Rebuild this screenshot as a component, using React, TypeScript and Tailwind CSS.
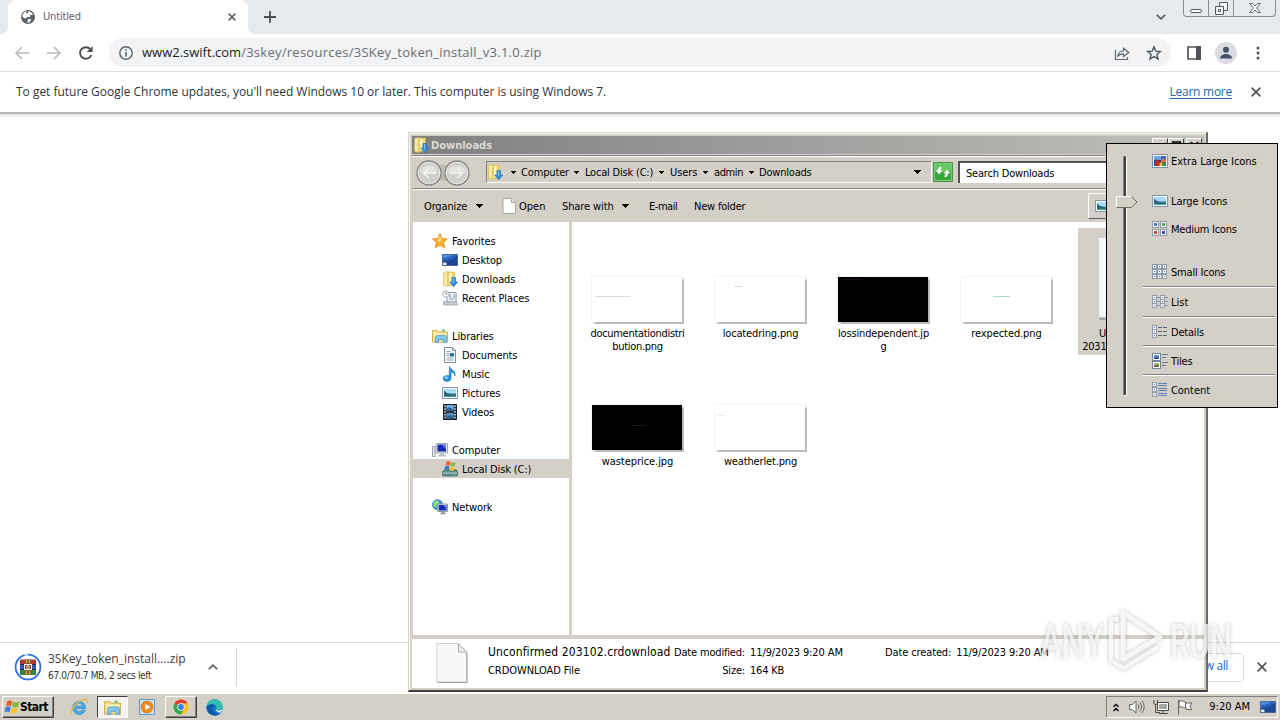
import clsx from 'clsx'
import type { ReactNode } from 'react'

const tahoma = 'font-["DejaVu_Sans_Condensed","DejaVu_Sans",sans-serif] [font-stretch:condensed]'
const chromeFont = 'font-["Open_Sans","Noto_Sans",sans-serif]'

type IconProps = { className?: string }

/* ---------- icons ---------- */

function Svg({ children, className, box = 16 }: { children: ReactNode; className?: string; box?: number }) {
  return (
    <svg viewBox={`0 0 ${box} ${box}`} className={clsx('shrink-0', className ?? 'h-4 w-4')} fill="none">
      {children}
    </svg>
  )
}

function Caret({ className }: IconProps) {
  return (
    <svg viewBox="0 0 7 4" className={clsx('shrink-0', className ?? 'h-1 w-[7px]')} shapeRendering="crispEdges">
      <path d="M0 0h7L3.5 4z" fill="#000" />
    </svg>
  )
}

function DownloadsIcon({ className }: IconProps) {
  return (
    <Svg className={className}>
      <path d="M1.500 1.500 6 .5v15l-4.500-1z" fill="#f8ea9c" stroke="#d2b654" strokeWidth=".7" />
      <path d="M6 1h6.500v13.500H6z" fill="#f0d873" stroke="#d2b654" strokeWidth=".7" />
      <path d="M7 2h2.500v11H7z" fill="#fbf3c0" />
      <path d="M10 6.500h3.500V11h2.200L11.700 15.700 7.800 11H10z" fill="#2f93e0" stroke="#1764ab" strokeWidth=".6" />
      <path d="M11 7.200h.9V12H11z" fill="#8cc8f5" />
    </Svg>
  )
}

function StarIcon() {
  return (
    <Svg>
      <path
        d="m8 .8 2.200 4.800 5.200.500-3.900 3.500 1.200 5.200L8 12.100l-4.700 2.700 1.200-5.200L.6 6.100l5.200-.5z"
        fill="#fcb131"
        stroke="#dd8a1c"
        strokeWidth=".9"
      />
      <path d="m8 2.800 1.500 3.600L8 9 4 7l2.500-.6z" fill="#ffe08a" />
    </Svg>
  )
}

function DesktopIcon({ className }: IconProps) {
  return (
    <Svg className={className}>
      <path d="M.5 2.500h15v11H.5z" fill="#2a62bd" stroke="#4d6a94" />
      <path d="M1 9c4 0 9-1 14-5v9H1z" fill="#1b4792" />
      <path d="M1 3h10C8 5 4 6 1 6z" fill="#4f8ee6" />
      <path d="M1 10.500h3.500V13H1z" fill="#dfe9f5" />
    </Svg>
  )
}

function RecentIcon() {
  return (
    <Svg>
      <path d="M5 2.500h9v10H5z" fill="#f7f9fb" stroke="#8796a6" />
      <path d="M7 5h2.500M11 5h2M7 7h2.500M11 7h2M7 9h5" stroke="#7593b5" />
      <path d="M1.500 11.500h13l1 3.500h-14z" fill="#c5c9ce" stroke="#a0a6ad" strokeWidth=".8" />
      <circle cx="4" cy="4" r="3.200" fill="#fff" stroke="#a5adb5" />
      <path d="M4 2v2h1.500" stroke="#556" strokeWidth=".8" />
    </Svg>
  )
}

function LibraryIcon({ className }: IconProps) {
  return (
    <Svg className={className}>
      <path d="M.5 2.500h5l1 1.500H15.500v10H.5z" fill="#f6e293" stroke="#cdb053" />
      <path d="M1 5.500h14v1H1z" fill="#fdf6d0" />
      <path d="M3.500 14.500V9.500C3.500 8 4.500 7.500 8 7.500h3.500c2 0 3 .5 3 2v5h-3v-3h-5v3z" fill="#86c8f0" stroke="#4a9bd4" strokeWidth=".8" />
      <path d="M10 1.500h3v2h-3z" fill="#6fc06a" />
    </Svg>
  )
}

function DocIcon() {
  return (
    <Svg>
      <path d="M2.500.5h8l3 3v12h-11z" fill="#fbfcfd" stroke="#7f8c9a" />
      <path d="M10.500.5v3h3" stroke="#7f8c9a" />
      <path d="M4.500 4.500h4M4.500 6.500h3M4.500 8.500h3M4.500 11h7M4.500 13h7" stroke="#8fa3bb" />
      <path d="M8 6h4v3.500H8z" fill="#2e6fb8" />
    </Svg>
  )
}

function MusicIcon() {
  return (
    <Svg>
      <path d="M7.500.5c.5 3 6 3 5.500 9.500-.3-2.300-2.300-3.800-4-4v7H7z" fill="#2f95df" stroke="#1d6fb2" strokeWidth=".6" />
      <ellipse cx="5" cy="12.500" rx="3.900" ry="2.900" fill="#2f95df" stroke="#1d6fb2" strokeWidth=".6" />
      <ellipse cx="4.200" cy="11.700" rx="1.700" ry="1.100" fill="#9fd6fa" />
    </Svg>
  )
}

function PictureIcon({ className }: IconProps) {
  return (
    <Svg className={className}>
      <path d="M.5 2.500h15v11H.5z" fill="#fff" stroke="#7f95ab" />
      <path d="M2 4h12v8H2z" fill="#a6dcf8" />
      <path d="M2 8.500c3-.5 5 .5 12 0V12H2z" fill="#2c6f7f" />
      <path d="M2 5.500 5 8l4 1.500H2z" fill="#2d6285" />
      <path d="M2 11h12v1H2z" fill="#4aa38c" />
    </Svg>
  )
}

function VideoIcon() {
  return (
    <Svg>
      <path d="M1.500.5h13v15h-13z" fill="#2a3440" stroke="#161c24" />
      <path d="M4.500 1h7v6h-7z" fill="#6fb4e8" />
      <path d="M4.500 9h7v6h-7z" fill="#5294c9" />
      <path d="M4.500 5l3-2 4 3v1h-7zM4.500 13l4-2 3 3v1h-7z" fill="#2d5f92" />
      <path d="M3 1.500v14M13 1.500v14" stroke="#fff" strokeWidth="1.200" strokeDasharray="1.500 1.300" />
    </Svg>
  )
}

function ComputerIcon() {
  return (
    <Svg>
      <path d="M.5 4.500h2.500v10H.5z" fill="#e3e6ea" stroke="#9aa2ab" />
      <path d="M4 1.500h11.500v9.500H4z" fill="#d9dee4" stroke="#a3abb4" />
      <path d="M5.500 2.500h8.500v7H5.500z" fill="#1728b8" />
      <path d="M9.500 2.500H14v4.500z" fill="#6d86ef" />
      <path d="M8 11.500h4V13H8zM6 13h8v1.500H6z" fill="#b3bac3" />
    </Svg>
  )
}

function WinFlag({ className }: IconProps) {
  return (
    <Svg className={className}>
      <path d="M3.200 2.300c2-1.200 3.500-1 5 0L7 7.300c-1.600-1-3-1-5 0z" fill="#ec5b25" />
      <path d="M9.100 2.800c1.900 1 3.900 1 6.400-.5L14.200 7.500c-2.300 1.200-4.500 1.200-6.300.1z" fill="#84b93a" />
      <path d="M1.700 8.300c2-1 3.500-.9 5 0L5.500 13.300c-1.600-1-3-1-5 0z" fill="#3a7bd5" />
      <path d="M7.700 8.700c1.900 1.100 4 1 6.200 0l-1.300 5.100c-2.200 1-4.300 1-6.200-.1z" fill="#f9c52b" />
    </Svg>
  )
}

function DiskIcon() {
  return (
    <Svg>
      <path d="m1 10 2-1.500h10.500l2 1.500v4.500l-.5.500H1l-.5-.5V11z" fill="#5a8a8c" stroke="#3f6668" strokeWidth=".7" />
      <path d="M1 12H15" stroke="#b9d7d6" />
      <path d="M11.500 13.800h2" stroke="#5fe04b" />
      <path d="M4.500.8c1.700-.9 2.900-.8 4.200 0L7.800 4.500c-1.500-.8-2.900-.7-4.200 0z" fill="#ec5b25" />
      <path d="M9.200 1.200c1.600.7 2.900.7 4.500 0l-.9 3.600c-1.600.8-2.900.7-4.400 0z" fill="#84b93a" />
      <path d="M3.300 5.200c1.700-.8 2.900-.7 4.200 0L6.600 9c-1.500-.8-2.900-.7-4.200 0z" fill="#3a7bd5" />
      <path d="M8.100 5.500c1.600.7 2.900.7 4.500 0l-.9 3.700c-1.600.8-2.900.7-4.400 0z" fill="#f9c52b" />
    </Svg>
  )
}

function NetworkIcon() {
  return (
    <Svg>
      <circle cx="5.500" cy="5.700" r="5" fill="#3aa0d8" stroke="#1c6fa5" strokeWidth=".7" />
      <path d="M2 3c2-2 4-1.500 5 0S4 5 4.500 7 2 8 1 6z" fill="#8fdc76" />
      <path d="M6 5h9.500v7.500H6z" fill="#d9dee4" stroke="#8c949d" />
      <path d="M7 6h7.500v5.500H7z" fill="#1728b8" />
      <path d="M11 6h3.500v3.500z" fill="#6d86ef" />
      <path d="M9 13h4v1.200H9zM8 14.200h6v1H8z" fill="#9aa2ab" />
    </Svg>
  )
}

function ExtraLargeIcon() {
  return (
    <Svg>
      <path d="M.5 1.500h15v13H.5z" fill="#fff" stroke="#7f8fa3" />
      <path d="M2 3h12v10H2z" fill="#27459a" />
      <path d="M2 3h7v4H2z" fill="#63a6ee" />
      <path d="M9 3h5v5H9z" fill="#3d63c4" />
      <path d="M3 8.500C4 6 6 6 7 8l.5 5H3z" fill="#b52a36" />
      <path d="M9 7c2-2 4-1 5 0v2h-5z" fill="#e9683b" />
      <path d="M7.500 9.500h3V13h-3z" fill="#f3c13a" />
      <path d="M10.500 9.500h3V13h-3z" fill="#3c9c4a" />
    </Svg>
  )
}

function MediumIcon() {
  const tiles = [
    [1, 1, '#3a78c2'],
    [9, 1, '#4fa355'],
    [1, 9, '#b8403a'],
    [9, 9, '#4149b5'],
  ] as const
  return (
    <Svg>
      {tiles.map(([x, y, color]) => (
        <g key={`${x}-${y}`}>
          <rect x={x - 0.5} y={y - 0.5} width="6" height="6" fill="#fff" stroke="#8b98a8" />
          <rect x={x + 1} y={y + 1} width="3" height="3" fill={color} />
        </g>
      ))}
    </Svg>
  )
}

function MiniBox({ x, y, s = 4 }: { x: number; y: number; s?: number }) {
  return (
    <>
      <rect x={x + 0.5} y={y + 0.5} width={s} height={s} fill="#fff" stroke="#8b99aa" />
      <rect x={x + 2} y={y + 2} width="1" height="1" fill="#3c6291" />
    </>
  )
}

function SmallIcon() {
  return (
    <Svg>
      {[0, 5, 10].map((y) => [0, 5, 10].map((x) => <MiniBox key={`${x}-${y}`} x={x} y={y} />))}
    </Svg>
  )
}

function ListIcon() {
  return (
    <Svg>
      {[1, 5, 9].map((y) => (
        <g key={y}>
          <MiniBox x={0} y={y} />
          <MiniBox x={8} y={y} />
          <path d={`M5 ${y + 2.500}h3M13 ${y + 2.500}h3`} stroke="#8290a1" />
        </g>
      ))}
    </Svg>
  )
}

function DetailsIcon() {
  return (
    <Svg>
      {[1, 5, 9].map((y) => (
        <g key={y}>
          <MiniBox x={0} y={y} />
          <path d={`M6 ${y + 2.500}h4M11 ${y + 2.500}h4`} stroke="#566578" />
        </g>
      ))}
    </Svg>
  )
}

function TilesIcon() {
  return (
    <Svg>
      {[0, 8].map((y) => (
        <g key={y}>
          <rect x=".5" y={y + 0.5} width="8" height="7" fill="#fff" stroke="#76869a" />
          <rect x="2" y={y + 2} width="5" height="4" fill={y ? '#a3b56e' : '#5a93d1'} />
          <rect x="2" y={y + 4} width="5" height="2" fill={y ? '#5f7a3c' : '#2b5c94'} />
          <path d={`M10 ${y + 1.500}h6M10 ${y + 4.500}h4`} stroke="#6d7b8c" />
        </g>
      ))}
    </Svg>
  )
}

function ContentIcon() {
  return (
    <Svg>
      {[0, 5, 10].map((y) => (
        <g key={y}>
          <MiniBox x={0} y={y} />
          <path d={`M6 ${y + 1.500}h9M6 ${y + 3.500}h9`} stroke="#5b82bb" />
        </g>
      ))}
    </Svg>
  )
}

function ChromeLogo({ className }: IconProps) {
  return (
    <Svg className={className}>
      <circle cx="8" cy="8" r="7.500" fill="#fbc116" />
      <path d="M8 8 1.500 4.250A7.500 7.500 0 0 1 14.500 4.250z" fill="#e33b2e" />
      <path d="M8 8 1.500 4.250A7.500 7.500 0 0 0 8 15.500l3.200-5.500z" fill="#2da94f" />
      <path d="M8 4.300h6.500A7.500 7.500 0 0 1 8 15.500l3.200-5.600z" fill="#fbc116" />
      <circle cx="8" cy="8" r="3.700" fill="#fff" />
      <circle cx="8" cy="8" r="2.900" fill="#3b7ded" />
    </Svg>
  )
}

function IeLogo() {
  return (
    <Svg className="h-[18px] w-[18px]">
      <path d="M14 9.500H5.500a2.700 2.700 0 0 0 5 1.300h3.200A5.900 5.900 0 1 1 14 9.500zM5.600 7.300h5.100a2.500 2.500 0 0 0-5.100 0z" fill="#45a9e6" stroke="#2a86c4" strokeWidth=".5" />
      <path d="M1.500 15C-.8 11 6 2.500 13 1.200c2.500-.3 2.500 1.800 1.500 3.300" stroke="#e9bd3b" strokeWidth="1.300" />
    </Svg>
  )
}

function PlayerLogo() {
  return (
    <Svg className="h-4 w-4">
      <path d="M.5.5h15v15H.5z" fill="#cfe3f4" stroke="#5c9ac9" />
      <circle cx="8" cy="8" r="6" fill="#ef8a1d" stroke="#c96a10" strokeWidth=".6" />
      <path d="M6.300 4.800 11.500 8l-5.200 3.200z" fill="#fff" />
    </Svg>
  )
}

function EdgeLogo() {
  return (
    <Svg className="h-[17px] w-[17px]">
      <circle cx="8" cy="8" r="7.700" fill="#1673c7" />
      <path d="M.4 7.500C1 3 4.500.3 8.300.3c4.500 0 7.500 3.200 7.400 6.500 0 2.600-2 3.900-4 3.900-1.800 0-2.500-.7-2-1.500C10.500 7 9 5 6 5 3.500 5 1.200 6 .4 7.500z" fill="#35c1b1" />
      <path d="M.4 7.500C1.500 5 6 3.800 8 6c-2.500 1-3 5.500.5 7.500 2 1 4.500.5 5.800-.8-3 4.500-12.300 4-13.900-5.200z" fill="#0d58a6" />
      <path d="M9.200 8.500c-.8 1 .2 2.600 3 2.400 1.500-.1 2.700-.7 3-1.200-.3 1.300-.6 2-1.200 2.800-2.500.8-5.500-.8-4.800-4z" fill="#d9edf8" />
    </Svg>
  )
}

function WinrarBadge() {
  return (
    <Svg box={28} className="h-7 w-7">
      <circle cx="14" cy="14" r="12.400" fill="#fff" stroke="#2f6fe0" strokeWidth="1.800" />
      <path d="M10.500 2.100A12.400 12.400 0 0 1 14 1.600" stroke="#d5e0f6" strokeWidth="2" />
      <path d="M6 6.500h16V12H6z" fill="#b23a3e" />
      <path d="M6 12h16v5H6z" fill="#3454b4" />
      <path d="M6 17h16v5H6z" fill="#2f8a43" />
      <path d="M6 11.500h16M6 16.500h16" stroke="#1b1b2b" strokeWidth=".8" />
      <path d="M11 6.500h6v15.500h-6z" fill="#8b5b2d" />
      <path d="M10 11h8v6h-8z" fill="#f0ede2" />
      <path d="M11.500 16v-3.500h1.500V16M15 16v-3.500h1.500V16" stroke="#7c3c2c" />
      <path d="M12.500 18v4M15.500 18v4M12.500 7v3M15.500 7v3" stroke="#d9b34a" />
    </Svg>
  )
}

function BlankFile({ className }: IconProps) {
  return (
    <svg viewBox="0 0 32 40" className={className} preserveAspectRatio="none" fill="none">
      <path d="M1 .5h21l8.500 8.500v30H1z" fill="#f8f8f8" stroke="#cfcfcf" />
      <path d="M31 9.500V39.500H1.500" stroke="#a3a3a3" strokeWidth="1.100" />
      <path d="M22.500.5V9h8z" fill="#ededed" stroke="#ababab" />
    </svg>
  )
}

/* ---------- Chrome ---------- */

function TabStrip() {
  return (
    <div className="flex h-[34px] shrink-0 bg-[#e7eaed]">
      <div className="flex w-2 shrink-0 items-end bg-white">
        <div className="h-full w-2 rounded-br-[7px] bg-[#e7eaed]" />
      </div>
      <div className="flex w-60 shrink-0 items-center rounded-t-[8px] bg-white pl-3 pr-3">
        <svg viewBox="0 0 16 16" className="h-4 w-4 shrink-0">
          <circle cx="8" cy="8" r="7" fill="#5f6368" />
          <path d="M8.500 2.200c2 .3 3.800 1.700 4.500 3.300-1 .8-1.800 0-2.800.6-.8.500.2 1.400-.6 2-.7.400-1.200-.300-2.100 0-1 .400-.800 1.300-1.700 1.300-1.300 0-2.700-1-3.500-1.900.2-2.900 2.500-5.200 5-5.400-.5.900-1.500 1-1.300 1.900.3.700 1.200.500 1.800.200.500-.500.100-1.300.7-2z" fill="#fff" />
          <path d="M8.300 10.200c1-.5 2.500-.2 2.800.6.200.9-1.100 1.600-1.900 2.800l-1.500.2c.2-1.300-.5-2.900.6-3.600z" fill="#fff" />
        </svg>
        <span className={clsx(tahoma, 'ml-[7px] pt-px text-[11px] tracking-[-0.15px] text-[#5f6368]')}>Untitled</span>
        <svg viewBox="0 0 8 8" className="ml-auto h-2 w-2 shrink-0">
          <path d="M.6.6l6.800 6.800M7.400.6.600 7.400" stroke="#5a5e63" strokeWidth="1.500" />
        </svg>
      </div>
      <div className="flex grow bg-white">
        <div className="flex grow items-center rounded-bl-[7px] bg-[#e7eaed] pl-4">
          <svg viewBox="0 0 12 12" className="h-3 w-3">
            <path d="M6 0v12M0 6h12" stroke="#4a4d51" strokeWidth="1.800" />
          </svg>
          <svg viewBox="0 0 10 6" className="ml-auto mr-[17px] h-[6px] w-[10px]">
            <path d="m.8.8 4.200 4 4.200-4" fill="none" stroke="#5a5e63" strokeWidth="1.700" />
          </svg>
          <div className="mr-[4px] flex h-[17px] w-[93px] self-start rounded-b-[4px] border border-t-0 border-[#898c90]">
            <div className="flex w-[25px] items-end justify-center border-r border-[#898c90] pb-[3px]">
              <div className="h-[4px] w-3 rounded-[2px] border border-[#55585d] bg-white" />
            </div>
            <div className="flex w-[25px] items-center justify-center border-r border-[#898c90]">
              <svg viewBox="0 0 13 13" className="h-[13px] w-[13px]" fill="#f4f5f6" stroke="#55585d">
                <path d="M4.500.5h8v8h-8z" />
                <path d="M.5 4.500h8v8h-8z" />
                <path d="M3.500 7.500h2v2h-2z" />
              </svg>
            </div>
            <div className="flex grow items-center justify-center">
              <svg viewBox="0 0 12 10" className="h-[10px] w-3" fill="#fff" stroke="#55585d" strokeWidth=".9">
                <path d="M.7.5h3L6 3 8.300.500h3L7.700 5l3.600 4.500h-3L6 7 3.700 9.500h-3L4.300 5z" />
              </svg>
            </div>
          </div>
        </div>
      </div>
    </div>
  )
}

function Toolbar() {
  return (
    <div className="flex h-[38px] shrink-0 items-center border-b border-[#dcdee0] bg-white pl-[14px] pr-[15px]">
      <svg viewBox="0 0 16 16" className="h-4 w-4" fill="none" stroke="#b9bbbe" strokeWidth="1.700">
        <path d="M15 8H2M8 2 2 8l6 6" />
      </svg>
      <svg viewBox="0 0 16 16" className="ml-4 h-4 w-4" fill="none" stroke="#b9bbbe" strokeWidth="1.700">
        <path d="M1 8h13M8 2l6 6-6 6" />
      </svg>
      <svg viewBox="0 0 16 16" className="ml-4 h-4 w-4" fill="none">
        <path d="M13.300 10A5.800 5.800 0 1 1 12.300 4.200" stroke="#4f5358" strokeWidth="2" />
        <path d="M14.700 1v6H8.700z" fill="#4f5358" />
      </svg>
      <div className="ml-[15px] flex h-[29px] w-[1062px] items-center rounded-full bg-[#f1f3f4] pl-[10px] pr-[9px]">
        <svg viewBox="0 0 14 14" className="h-[14px] w-[14px]" fill="none" stroke="#5f6368" strokeWidth="1.400">
          <circle cx="7" cy="7" r="6.200" />
          <path d="M7 6v4.500M7 3.200v1.500" strokeWidth="1.600" />
        </svg>
        <div className={clsx(chromeFont, 'ml-[9px] whitespace-nowrap pb-px text-[13px] leading-4')}>
          <span className="text-[#202124]">www2.swift.com</span>
          <span className="tracking-[0.26px] text-[#6a6e73]">/3skey/resources/3SKey_token_install_v3.1.0.zip</span>
        </div>
        <svg viewBox="0 0 16 16" className="ml-auto h-4 w-4" fill="none" stroke="#63676c" strokeWidth="1.200">
          <path d="M1.500 5v9.500h12V12" />
          <path d="M4 11c.3-3.500 2.500-5 5.500-5V3.200L14.800 7.500 9.500 11.500V8.800C7 8.800 5.500 9.300 4 11z" />
        </svg>
        <svg viewBox="0 0 16 16" className="ml-4 h-4 w-4" fill="none" stroke="#505459" strokeWidth="1.400">
          <path d="m8 1.800 1.800 4.300 4.600.4-3.500 3 1.100 4.600L8 11.600l-4 2.500 1.100-4.600-3.500-3 4.600-.4z" />
        </svg>
      </div>
      <svg viewBox="0 0 14 14" className="ml-4 h-[14px] w-[14px]">
        <path d="M1 1h12v12H1z" fill="none" stroke="#505459" strokeWidth="1.700" />
        <path d="M9 0h5v14H9z" fill="#505459" />
      </svg>
      <svg viewBox="0 0 22 22" className="ml-[14px] h-[22px] w-[22px]">
        <circle cx="11" cy="11" r="11" fill="#dadde3" />
        <circle cx="11" cy="7.800" r="3" fill="#47516a" />
        <path d="M5 16.500c0-3 3-4.500 6-4.500s6 1.500 6 4.500z" fill="#47516a" />
      </svg>
      <svg viewBox="0 0 4 14" className="ml-auto mr-[5px] h-[14px] w-1" fill="#505459">
        <circle cx="2" cy="2" r="1.500" />
        <circle cx="2" cy="7" r="1.500" />
        <circle cx="2" cy="12" r="1.500" />
      </svg>
    </div>
  )
}

function CloseGlyph() {
  return (
    <svg viewBox="0 0 10 10" className="h-[10px] w-[10px]">
      <path d="m.7.7 8.600 8.600M9.300.7.700 9.300" stroke="#505459" strokeWidth="1.700" />
    </svg>
  )
}

function InfoBar() {
  return (
    <>
      <div className={clsx(chromeFont, 'flex h-10 shrink-0 items-center bg-white pl-4 pr-[19px] text-[12px]')}>
        <span className="whitespace-nowrap tracking-[-0.02px] text-[#303338]">
          To get future Google Chrome updates, you'll need Windows 10 or later. This computer is using Windows 7.
        </span>
        <span className="ml-auto mr-[19px] whitespace-nowrap tracking-[-0.25px] text-[#1f66b5] underline underline-offset-2">Learn more</span>
        <CloseGlyph />
      </div>
      <div className="h-[2px] shrink-0 bg-[#b4b4b4]" />
      <div className="h-1 shrink-0 bg-linear-to-b from-[#e2e2e2] to-white" />
    </>
  )
}

function DownloadShelf() {
  return (
    <div className="flex h-[51px] shrink-0 items-center border-t border-[#d9dbde] bg-white pb-[2px] pl-[14px] pr-[13px]">
      <WinrarBadge />
      <div className="ml-[6px] w-[158px]">
        <div className={clsx(chromeFont, 'whitespace-nowrap text-[12px] leading-4 text-[#3c4043]')}>3SKey_token_install....zip</div>
        <div className={clsx(tahoma, 'whitespace-nowrap text-[10px] leading-[17px] tracking-[-0.33px] text-[#303338]')}>67.0/70.7 MB, 2 secs left</div>
      </div>
      <svg viewBox="0 0 10 6" className="ml-[2px] h-[6px] w-[10px]">
        <path d="m.8 5.200 4.200-4 4.200 4" fill="none" stroke="#5a5e63" strokeWidth="1.700" />
      </svg>
      <div className="ml-[18px] h-[38px] w-px bg-[#d5d7da]" />
      <div className={clsx(chromeFont, 'ml-auto mr-[13px] flex h-[29px] w-[82px] items-center justify-end whitespace-nowrap rounded-[4px] border border-[#d9dbde] pb-[2px] pr-[15px] text-[12px] tracking-[-0.4px] text-[#1a67d2]')}>
        Show all
      </div>
      <CloseGlyph />
    </div>
  )
}

/* ---------- Explorer ---------- */

const crumbs = [
  { label: 'Computer', slot: 'w-4', text: 'w-[47px] tracking-[-0.15px]' },
  { label: 'Local Disk (C:)', slot: 'w-[17px]', text: 'w-[68px] tracking-[-0.2px]' },
  { label: 'Users', slot: 'w-[17px]', text: 'w-[27px] tracking-[-0.1px]' },
  { label: 'admin', slot: 'w-[17px]', text: 'w-[29px] tracking-[-0.4px]' },
  { label: 'Downloads', slot: 'w-4', text: 'w-[53px] tracking-[-0.2px]' },
]

function AddressBar() {
  return (
    <div className="flex h-[34px] items-center border-b border-t border-b-[#808080] border-t-[#808080] shadow-[inset_0_1px_0_#fff,0_1px_0_#fff]">
      <svg viewBox="0 0 54 28" className="ml-1 mt-px h-7 w-[54px]" fill="none">
        <path d="M14 4c7 3 19 3 26 0v20c-7-3-19-3-26 0z" fill="#bdbbb6" />
        {[13, 41].map((cx) => (
          <g key={cx}>
            <circle cx={cx} cy="14" r="12" fill="#cfcecb" stroke="#85847f" strokeWidth="1.300" />
            <circle cx={cx} cy="14" r="10.800" stroke="#efeeec" strokeWidth=".8" />
            <path d={`M${cx - 9} 13a9.500 9.500 0 0 1 18 0c-6 2-12 2-18 0z`} fill="#e3e2df" />
          </g>
        ))}
        <path d="M20 14H8m5-5-5.500 5 5.500 5" stroke="#f1f0ee" strokeWidth="1.800" />
        <path d="M34 14h12m-5-5 5.500 5-5.500 5" stroke="#f1f0ee" strokeWidth="1.800" />
      </svg>
      <div className="ml-4 flex h-[22px] w-[446px] items-center border border-b-white border-l-[#808080] border-r-white border-t-[#808080]">
        <DownloadsIcon className="h-4 w-4" />
        <div className="w-[2px]" />
        {crumbs.map((crumb) => (
          <div key={crumb.label} className="flex items-center whitespace-nowrap">
            <div className={clsx('flex justify-center', crumb.slot)}>
              <Caret className="h-[3px] w-[5px]" />
            </div>
            <span className={crumb.text}>{crumb.label}</span>
          </div>
        ))}
        <Caret className="ml-auto mr-[10px] h-1 w-[7px]" />
      </div>
      <svg viewBox="0 0 20 20" className="ml-px h-5 w-5 shrink-0">
        <path d="M.5.500h19v19H.5z" fill="#36a83a" stroke="#4b8f4d" />
        <path d="M1.500 1.500h17v17h-17z" stroke="#a5dba3" strokeWidth=".7" fill="none" />
        <path d="M1 1h18v8C12 11 7 11 1 9z" fill="#74ce70" fillOpacity=".8" />
        <path d="M7.500 4.500c-1.500.7-2.500 2-2.500 4H2.800L6 12.500l3.200-4H7.300c0-1.500.7-2 1.700-2.500z" fill="#fff" />
        <path d="M12.500 15.500c1.500-.7 2.500-2 2.500-4h2.200L14 7.500l-3.200 4h1.900c0 1.500-.7 2-1.700 2.500z" fill="#fff" />
      </svg>
      <div className="ml-[5px] flex h-[22px] grow items-center border-l-2 border-t-2 border-[#55534f] bg-white pl-[6px] tracking-[-0.2px]">
        Search Downloads
      </div>
    </div>
  )
}

function CommandBar() {
  return (
    <div className="flex h-8 items-center whitespace-nowrap pl-3">
      <span className="w-[52px] tracking-[-0.15px]">Organize</span>
      <Caret className="h-1 w-[7px]" />
      <svg viewBox="0 0 14 16" className="ml-[19px] h-4 w-[14px]">
        <path d="M1 .5h8.500l4 4v11H1z" fill="#fff" stroke="#a9a7a1" />
        <path d="M9.500.5v4h4" fill="#e5e5e5" stroke="#a9a7a1" />
      </svg>
      <span className="ml-[3px] w-[43px]">Open</span>
      <span className="w-[60px] tracking-[-0.1px]">Share with</span>
      <Caret className="h-1 w-[7px]" />
      <span className="ml-5 w-[45px] tracking-[-0.45px]">E-mail</span>
      <span className="w-[60px] tracking-[-0.2px]">New folder</span>
      <div className="ml-auto flex h-[26px] w-[116px] items-center border-b border-l border-t border-b-[#606060] border-l-white border-t-white pl-[6px]">
        <PictureIcon className="h-4 w-4" />
      </div>
    </div>
  )
}

const navGroups = [
  {
    label: 'Favorites',
    icon: <StarIcon />,
    items: [
      { label: 'Desktop', icon: <DesktopIcon /> },
      { label: 'Downloads', icon: <DownloadsIcon /> },
      { label: 'Recent Places', icon: <RecentIcon /> },
    ],
  },
  {
    label: 'Libraries',
    icon: <LibraryIcon />,
    items: [
      { label: 'Documents', icon: <DocIcon /> },
      { label: 'Music', icon: <MusicIcon /> },
      { label: 'Pictures', icon: <PictureIcon /> },
      { label: 'Videos', icon: <VideoIcon /> },
    ],
  },
  {
    label: 'Computer',
    icon: <ComputerIcon />,
    items: [{ label: 'Local Disk (C:)', icon: <DiskIcon />, selected: true }],
  },
  { label: 'Network', icon: <NetworkIcon />, items: [] },
]

function NavPane() {
  return (
    <div className="ml-px flex w-[156px] shrink-0 flex-col gap-[19px] bg-white pt-[9px] tracking-[-0.12px]">
      {navGroups.map((group) => (
        <div key={group.label}>
          <div className="flex h-[19px] items-center gap-1 pl-[19px]">
            {group.icon}
            <span className="pt-[2px]">{group.label}</span>
          </div>
          {group.items.map((item: { label: string; icon: ReactNode; selected?: boolean }) => (
            <div key={item.label} className={clsx('flex h-[19px] items-center gap-1 pl-[29px]', item.selected && 'bg-[#d4d0c8]')}>
              {item.icon}
              <span className="pt-[2px]">{item.label}</span>
            </div>
          ))}
        </div>
      ))}
    </div>
  )
}

// each thumbnail carries the faint line of text that its image holds
const files = [
  { lines: ['documentationdistri', 'bution.png'], thumb: 'bg-white', mark: 'ml-[3px] mt-[18px] w-[35px] bg-[#dcdcdc]', track: 'tracking-[-0.3px]' },
  { lines: ['locatedring.png'], thumb: 'bg-white', mark: 'ml-[19px] mt-2 w-2 bg-[#d9d9d9]', track: 'tracking-[-0.15px]' },
  { lines: ['lossindependent.jp', 'g'], thumb: 'bg-black', mark: 'ml-[5px] mt-px w-[18px] bg-[#1d0620]', track: 'tracking-[-0.15px]' },
  { lines: ['rexpected.png'], thumb: 'bg-white', mark: 'ml-8 mt-[18px] w-[17px] bg-[#a9dccf]', track: 'tracking-[-0.1px]' },
  { lines: ['Unconfirmed', '203102.crdownload'], selected: true, track: 'tracking-[-0.2px]' },
  { lines: ['wasteprice.jpg'], thumb: 'bg-black', mark: 'ml-10 mt-[19px] w-[13px] bg-[#1b1b1b]', track: 'tracking-[-0.05px]' },
  { lines: ['weatherlet.png'], thumb: 'bg-white', mark: 'ml-[2px] mt-[9px] w-2 bg-[#ededed]', track: 'tracking-[-0.15px]' },
]

function FileGrid() {
  return (
    <div className="grid grow auto-rows-[128px] grid-cols-[repeat(5,103px)] gap-x-5 overflow-hidden bg-white pl-[14px] pt-[6px]">
      {files.map((file) => (
        <div key={file.lines[0]} className={clsx('flex h-[127px] flex-col items-center', file.selected && 'bg-[#d4d0c8]')}>
          {file.selected ? (
            <BlankFile className="mb-[7px] mt-2 h-[84px] w-[67px]" />
          ) : (
            <div
              className={clsx(
                'mb-[5px] mr-px mt-[49px] h-[45px] w-[90px] shrink-0 shadow-[0_0_0_1px_rgba(0,0,0,0.04),1px_1px_1px_0.5px_rgba(0,0,0,0.25)]',
                file.thumb
              )}
            >
              <div className={clsx('h-px', file.mark, 'translate-y-px')} />
            </div>
          )}
          {file.lines.map((line) => (
            <div key={line} className={clsx('h-[13px] whitespace-nowrap leading-[13px]', file.track)}>
              {line}
            </div>
          ))}
        </div>
      ))}
    </div>
  )
}

function DetailsPane() {
  return (
    <div className="flex h-[49px] shrink-0 whitespace-nowrap bg-white">
      <BlankFile className="ml-6 mt-1 h-10 w-8" />
      <div className="ml-5 mt-1 w-[183px]">
        <div className="h-[18px] text-[12px] leading-[18px] tracking-[0.1px]">Unconfirmed 203102.crdownload</div>
        <div className="h-[19px] leading-[19px] tracking-[-0.07px]">CRDOWNLOAD File</div>
      </div>
      <div className="mt-1 grid h-[37px] grid-cols-[74px_136px] grid-rows-[18px_19px] items-center gap-x-[4px] tracking-[-0.18px]">
        <span className="text-right">Date modified:</span>
        <span className="pl-px tracking-[-0.1px]">11/9/2023 9:20 AM</span>
        <span className="text-right">Size:</span>
        <span className="pl-px">164 KB</span>
      </div>
      <div className="mt-1 flex h-[18px] items-center gap-[5px] tracking-[-0.12px]">
        <span>Date created:</span>
        <span>11/9/2023 9:20 AM</span>
      </div>
    </div>
  )
}

function ExplorerWindow() {
  return (
    <div className={clsx(tahoma, 'absolute left-[408px] top-[132px] flex h-[560px] w-[800px] flex-col border border-b-2 border-r-2 border-b-[#404040] border-l-[#d4d0c8] border-r-[#6b6b6b] border-t-[#d4d0c8] bg-[#d4d0c8] pb-[2px] pl-[3px] pr-[2px] pt-[3px] text-[11px] leading-[13px] text-black shadow-[inset_1px_1px_0_#fff]')}>
      <div className="flex h-[18px] shrink-0 items-center bg-linear-to-r from-[#808080] to-[#c0c0bc] pl-px font-bold text-[#dedad2]">
        <DownloadsIcon className="h-4 w-4" />
        <span className="ml-[2px]">Downloads</span>
        <div className="ml-auto mr-[2px] flex">
          {['_', 'max', 'x'].map((name) => (
            <div key={name} className={clsx('flex h-[14px] w-4 items-center justify-center border border-b-[#404040] border-l-white border-r-[#404040] border-t-white bg-[#d4d0c8]', name === 'x' && 'ml-[2px]')}>
              <svg viewBox="0 0 9 9" className="h-[9px] w-[9px]" stroke="#000" strokeWidth="1.600" fill="none">
                {name === '_' && <path d="M1 8h6" />}
                {name === 'max' && <path d="M.7 1h7.600v7H.7z" />}
                {name === 'x' && <path d="m1 1 7 7M8 1 1 8" />}
              </svg>
            </div>
          ))}
        </div>
      </div>
      <div className="mt-px">
        <AddressBar />
      </div>
      <div className="mt-px">
        <CommandBar />
      </div>
      <div className="flex min-h-0 grow">
        <NavPane />
        <div className="w-[3px] shrink-0" />
        <FileGrid />
      </div>
      <div className="h-[4px] shrink-0" />
      <DetailsPane />
    </div>
  )
}

function Divider({ className }: IconProps) {
  return <div className={clsx('ml-9 mr-[2px] h-[2px] border-b border-t border-b-white border-t-[#808080]', className)} />
}

function MenuItem({ icon, label, className }: { icon: ReactNode; label: string; className: string }) {
  return (
    <div className={clsx('ml-[45px] flex h-4 items-center gap-[3px] whitespace-nowrap', className)}>
      {icon}
      {label}
    </div>
  )
}

function ViewMenu() {
  return (
    <div className={clsx(tahoma, 'absolute left-[1106px] top-[143px] h-[265px] w-[172px] border border-black bg-[#d4d0c8] text-[11px] leading-[13px] text-black')}>
      <MenuItem icon={<ExtraLargeIcon />} label="Extra Large Icons" className="mt-[9px] tracking-[-0.02px]" />
      <MenuItem icon={<PictureIcon />} label="Large Icons" className="mt-6 tracking-[-0.05px]" />
      <MenuItem icon={<MediumIcon />} label="Medium Icons" className="mt-3 tracking-[-0.25px]" />
      <MenuItem icon={<SmallIcon />} label="Small Icons" className="mt-[27px] tracking-[-0.2px]" />
      <Divider className="mt-[6px]" />
      <MenuItem icon={<ListIcon />} label="List" className="mt-[6px]" />
      <Divider className="mt-[6px]" />
      <MenuItem icon={<DetailsIcon />} label="Details" className="mt-[6px] tracking-[-0.2px]" />
      <Divider className="mt-[5px]" />
      <MenuItem icon={<TilesIcon />} label="Tiles" className="mt-[6px] tracking-[-0.2px]" />
      <Divider className="mt-[5px]" />
      <MenuItem icon={<ContentIcon />} label="Content" className="mt-[6px] tracking-[-0.05px]" />

      {/* size slider */}
      <div className="absolute left-[16px] top-[12px] h-[240px] w-1 border border-b-white border-l-[#808080] border-r-white border-t-[#808080] bg-[#404040]" />
      <svg viewBox="0 0 22 12" className="absolute left-[9px] top-[52px] h-3 w-[22px]">
        <path d="M.5.500h15l5.500 5.500-5.500 5.500H.5z" fill="#d4d0c8" stroke="#fff" />
        <path d="M.5 11.500h15L21 6 15.500.5" fill="none" stroke="#6b6b6b" />
      </svg>
    </div>
  )
}

/* ---------- taskbar ---------- */

function Taskbar() {
  return (
    <div className={clsx(tahoma, 'flex h-[27px] shrink-0 items-center border-t border-white bg-[#d4d0c8] pl-[2px] pr-[2px] text-[11px] text-black')}>
      <div className="flex h-[22px] w-[52px] items-center border border-b-[#404040] border-l-white border-r-[#404040] border-t-white font-bold shadow-[inset_-1px_-1px_0_#808080]">
        <WinFlag className="ml-px h-4 w-4" />
        <span className="text-[12px] tracking-[-0.6px]">Start</span>
      </div>
      <div className="ml-[15px] flex w-[20px] justify-center">
        <IeLogo />
      </div>
      <div className="ml-[8px] flex h-[22px] w-[31px] items-center justify-center border border-b-white border-l-[#404040] border-r-white border-t-[#404040] bg-[#f4f3f0]">
        <LibraryIcon className="h-[17px] w-[17px]" />
      </div>
      <div className="ml-[11px]">
        <PlayerLogo />
      </div>
      <div className="ml-[10px] flex h-[22px] w-8 items-center justify-center border border-b-[#404040] border-l-white border-r-[#404040] border-t-white shadow-[inset_-1px_-1px_0_#808080]">
        <ChromeLogo className="h-4 w-4" />
      </div>
      <div className="ml-[9px]">
        <EdgeLogo />
      </div>
      <div className="ml-auto flex h-[22px] w-[172px] items-center border border-b-white border-l-[#808080] border-r-white border-t-[#808080] pl-[6px] pr-px">
        <svg viewBox="0 0 6 9" className="h-[9px] w-[6px]" fill="none" stroke="#000" strokeWidth="1.300">
          <path d="m.5 3.800L3 1.300l2.500 2.500M.5 8L3 5.500 5.500 8" />
        </svg>
        <svg viewBox="0 0 16 16" className="ml-[10px] h-4 w-4" fill="none" stroke="#66645f">
          <path d="M.5 5.500h3L7 2v12l-3.500-3.500h-3z" fill="#fff" />
          <path d="M9 5.500c1 1.500 1 3.500 0 5M11 3.500c2 3 2 6 0 9M13 2c2.800 4 2.800 8 0 12" />
        </svg>
        <svg viewBox="0 0 16 16" className="ml-2 h-4 w-4" fill="none" stroke="#4b4a46">
          <path d="M4.500 3.500h11v8h-11z" fill="#fff" />
          <path d="M6 5h8v5H6z" fill="#a7a59f" stroke="none" />
          <path d="M.8 1v3.500c0 1 3.700 1 3.700 0V1M2.600 5v8.500H7M6 14.500h9M10 12v2" />
        </svg>
        <svg viewBox="0 0 16 16" className="ml-2 h-4 w-4" fill="none" stroke="#66645f">
          <path d="M1.500 1v14.500M2 2c3-1 4 1 6.500 1v6C6 9 5 7 2 8zM8.500 4h6.500l-2 3 1.500 3.500h-5V9" fill="#fff" />
        </svg>
        <span className="ml-auto mr-[10px] whitespace-nowrap">9:20 AM</span>
        <DesktopIcon className="h-4 w-4" />
      </div>
    </div>
  )
}

function Watermark() {
  return (
    <svg viewBox="0 0 200 70" className="absolute left-[1036px] top-[607px] h-[70px] w-[200px] drop-shadow-[0_0_2px_rgba(0,0,0,0.3)]">
      <g fill="#fff" fillOpacity=".7" fontFamily="Roboto, sans-serif" fontSize="48" fontWeight="500">
        <text x="4" y="51" textLength="64" lengthAdjust="spacingAndGlyphs">ANY</text>
        <text x="134" y="51" textLength="62" lengthAdjust="spacingAndGlyphs">RUN</text>
      </g>
      <g fill="none" stroke="#fff" strokeOpacity=".8" strokeLinejoin="round">
        <path d="M87 6v46l37-22z" strokeWidth="5" />
        <path d="M82 12h-7v42l13 7 34-21" strokeWidth="4" />
      </g>
    </svg>
  )
}

export default function App() {
  return (
    <div className="relative flex h-[720px] w-[1280px] flex-col overflow-hidden bg-white">
      <TabStrip />
      <Toolbar />
      <InfoBar />
      <div className="grow" />
      <DownloadShelf />
      <Taskbar />

      <ExplorerWindow />
      <ViewMenu />
      <Watermark />
    </div>
  )
}
